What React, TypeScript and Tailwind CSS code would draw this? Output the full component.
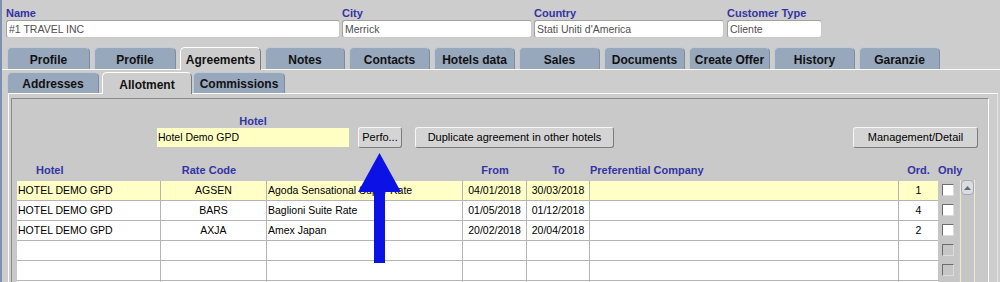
import React from 'react';

const tabs1 = [
  { t: 'Profile', c: 'w-[83px]' },
  { t: 'Profile', c: 'w-[82px]' },
  { t: 'Agreements', c: 'w-[81px]', a: true },
  { t: 'Notes', c: 'w-[80px]' },
  { t: 'Contacts', c: 'w-[81px]' },
  { t: 'Hotels data', c: 'w-[81px]' },
  { t: 'Sales', c: 'w-[81px]' },
  { t: 'Documents', c: 'w-[81px]' },
  { t: 'Create Offer', c: 'w-[81px]' },
  { t: 'History', c: 'w-[81px]' },
  { t: 'Garanzie', c: 'w-[81px]' },
];

const tabs2 = [
  { t: 'Addresses', c: 'w-[92px]' },
  { t: 'Allotment', c: 'w-[90px] ml-[3px]', a: true },
  { t: 'Commissions', c: 'w-[92px] ml-[1px]' },
];

type Row = { hotel: string; rate: string; desc: string; from: string; to: string; ord: string; on: boolean };

const rows: Row[] = [
  { hotel: 'HOTEL DEMO GPD', rate: 'AGSEN', desc: 'Agoda Sensational Super Rate', from: '04/01/2018', to: '30/03/2018', ord: '1', on: true },
  { hotel: 'HOTEL DEMO GPD', rate: 'BARS', desc: 'Baglioni Suite Rate', from: '01/05/2018', to: '01/12/2018', ord: '4', on: true },
  { hotel: 'HOTEL DEMO GPD', rate: 'AXJA', desc: 'Amex Japan', from: '20/02/2018', to: '20/04/2018', ord: '2', on: true },
  { hotel: '', rate: '', desc: '', from: '', to: '', ord: '', on: false },
  { hotel: '', rate: '', desc: '', from: '', to: '', ord: '', on: false },
  { hotel: '', rate: '', desc: '', from: '', to: '', ord: '', on: false },
];

function Tab({ label, cls, active, h }: { label: string; cls: string; active?: boolean; h: string }) {
  if (active) {
    return (
      <div
        className={`${cls} ${h} relative z-10 -mb-px rounded-t-[5px] bg-[#cdcdcd] border-t border-l border-white border-r border-r-[#7a7a7a] flex items-center justify-center pt-[2px] text-[12px] font-bold text-[#111]`}
      >
        {label}
      </div>
    );
  }
  return (
    <div
      className={`${cls} ${h} rounded-t-[5px] bg-[#97a7bc] border-t border-l border-[#c2cad6] border-r border-r-[#7e8ca2] flex items-center justify-center pt-[2px] text-[12px] font-bold text-[#111]`}
    >
      {label}
    </div>
  );
}

function Field({ label, value, w, ml }: { label: string; value: string; w: string; ml: string }) {
  return (
    <div className={`flex flex-col ${w} ${ml}`}>
      <div className="h-[14px] leading-[14px] text-[11px] font-bold text-[#3434a4]">{label}</div>
      <div className="h-[18px] bg-white border border-[#a2a2a2] border-r-[#c8c8c8] border-b-[#c8c8c8] rounded-[3px] px-[2px] text-[10.5px] leading-[16px] text-[#505050]">
        {value}
      </div>
    </div>
  );
}

function Btn({ label, cls }: { label: string; cls: string }) {
  return (
    <div
      className={`${cls} h-[21px] mt-[13px] bg-[#d4d4d4] border-t border-l border-[#f6f6f6] border-r border-b border-r-[#7c7c7c] border-b-[#7c7c7c] rounded-[3px] flex items-center justify-center text-[11px] text-black`}
    >
      {label}
    </div>
  );
}

export default function App() {
  return (
    <div className="relative w-[1000px] h-[282px] overflow-hidden bg-[#cdcdcd] border-l-2 border-[#7d90b0] font-['Liberation_Sans',Arial,sans-serif]">
      {/* Header fields */}
      <div className="flex pt-[6px] pl-[4px]">
        <Field label="Name" value="#1 TRAVEL INC" w="w-[334px]" ml="ml-0" />
        <Field label="City" value="Merrick" w="w-[190px]" ml="ml-[2px]" />
        <Field label="Country" value="Stati Uniti d'America" w="w-[190px]" ml="ml-[2px]" />
        <Field label="Customer Type" value="Cliente" w="w-[95px]" ml="ml-[3px]" />
      </div>

      {/* Tab row 1 */}
      <div className="flex items-end gap-[4px] pl-[5px] mt-[9px] h-[22px]">
        {tabs1.map((t, i) => (
          <Tab key={i} label={t.t} cls={t.c} active={t.a} h={t.a ? 'h-[23px]' : 'h-[22px]'} />
        ))}
      </div>
      <div className="h-px bg-white" />

      {/* Tab row 2 */}
      <div className="flex items-end pl-[5px] mt-[2px] h-[21px]">
        {tabs2.map((t, i) => (
          <Tab key={i} label={t.t} cls={t.c} active={t.a} h={t.a ? 'h-[22px]' : 'h-[21px]'} />
        ))}
      </div>

      {/* Outer panel */}
      <div className="ml-[6px] mr-[2px] border-t border-l border-white border-r border-r-[#e4e4e4] pl-[2px] pt-[4px] pr-[8px]">
        {/* Inner sunken panel */}
        <div className="h-[200px] bg-[#c9c9c9] border-t border-l border-[#8a8a8a] border-r border-r-white">
          {/* Hotel selector + buttons */}
          <div className="flex items-start pt-[15px]">
            <div className="flex flex-col ml-[145px] w-[192px]">
              <div className="h-[14px] leading-[14px] text-center text-[11px] font-bold text-[#3434a4]">Hotel</div>
              <div className="h-[19px] bg-[#ffffc4] pl-[1px] text-[10.5px] leading-[19px] text-black">Hotel Demo GPD</div>
            </div>
            <Btn label="Perfo..." cls="ml-[9px] w-[44px]" />
            <Btn label="Duplicate agreement in other hotels" cls="ml-[13px] w-[199px]" />
            <Btn label="Management/Detail" cls="ml-[239px] w-[125px]" />
          </div>

          {/* Table header */}
          <div className="flex items-center ml-[5px] mt-[14px] h-[19px] pb-[3px] text-[11px] font-bold text-[#3434a4]">
            <div className="w-[144px] pl-[19px]">Hotel</div>
            <div className="w-[106px] text-center pr-[10px]">Rate Code</div>
            <div className="w-[196px]" />
            <div className="w-[64px] text-center">From</div>
            <div className="w-[63px] text-center">To</div>
            <div className="w-[309px]">Preferential Company</div>
            <div className="w-[39px] text-center">Ord.</div>
            <div className="w-[23px] text-center">Only</div>
          </div>

          {/* Table body */}
          <div className="flex ml-[5px]">
            <div className="flex flex-col w-[921px]">
              {rows.map((r, i) => (
                <div
                  key={i}
                  className={`flex h-[20px] border-b border-[#b5b5b5] text-[10.5px] leading-[19px] text-black ${i === 0 ? 'bg-[#ffffc6]' : 'bg-white'}`}
                >
                  <div className="w-[144px] border-r border-[#b5b5b5] pl-[1px] whitespace-nowrap overflow-hidden">{r.hotel}</div>
                  <div className="w-[106px] border-r border-[#b5b5b5] text-center">{r.rate}</div>
                  <div className="w-[196px] border-r border-[#b5b5b5] pl-[1px] whitespace-nowrap overflow-hidden">{r.desc}</div>
                  <div className="w-[64px] border-r border-[#b5b5b5] text-center">{r.from}</div>
                  <div className="w-[63px] border-r border-[#b5b5b5] text-center">{r.to}</div>
                  <div className="w-[309px] border-r border-[#b5b5b5]" />
                  <div className="w-[39px] text-center">{r.ord}</div>
                </div>
              ))}
            </div>
            {/* Only checkboxes */}
            <div className="flex flex-col w-[21px] bg-[#c6c6c6]">
              {rows.map((r, i) => (
                <div key={i} className="h-[20px] pt-[3px] pl-[4px]">
                  <div
                    className={`w-[12px] h-[12px] border border-[#6c6c6c] border-r-[#dcdcdc] border-b-[#dcdcdc] ${r.on ? 'bg-white' : 'bg-[#c6c6c6]'}`}
                  />
                </div>
              ))}
            </div>
            {/* Scrollbar */}
            <div className="ml-[1px] -mt-px w-[15px] h-[121px] flex flex-col border-l border-r border-[#efebc4] bg-[#c6c6c6]">
              <div className="h-[15px] rounded-[4px] bg-[#d9dce2] border border-[#a3a9b3] flex items-center justify-center">
                <svg width="7" height="4" viewBox="0 0 7 4">
                  <polygon points="3.5,0 7,4 0,4" fill="#6a6a6a" />
                </svg>
              </div>
            </div>
          </div>
        </div>
      </div>

      {/* Blue arrow overlay */}
      <svg className="absolute left-[354px] top-[150px]" width="50" height="116" viewBox="0 0 50 116">
        <polygon points="23.5,3 45,42 29,42 29,113 18,113 18,42 2,42" fill="#0c12e6" />
      </svg>
    </div>
  );
}
